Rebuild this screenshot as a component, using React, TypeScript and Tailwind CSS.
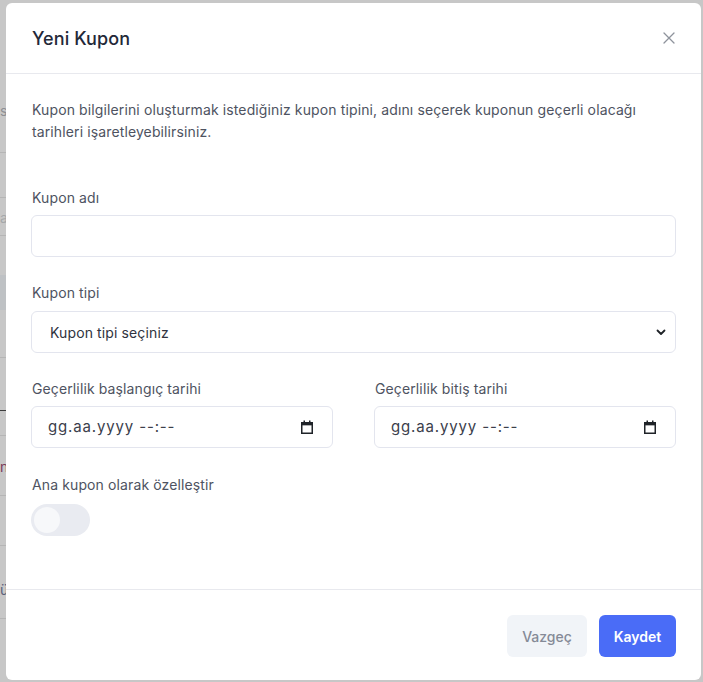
import React from "react";

function CalendarIcon() {
  return (
    <svg width="12" height="14" viewBox="0 0 12 14" className="shrink-0">
      <rect x="0.75" y="2.75" width="10.5" height="10.5" fill="none" stroke="#1f2328" strokeWidth="1.5" />
      <rect x="0.75" y="2.75" width="10.5" height="2.6" fill="#1f2328" />
      <rect x="2.5" y="0.5" width="1.5" height="2.5" fill="#1f2328" />
      <rect x="8" y="0.5" width="1.5" height="2.5" fill="#1f2328" />
    </svg>
  );
}

function DateField() {
  return (
    <div className="flex h-[42px] items-center justify-between rounded-[6px] border border-[#e3e5ee] bg-white pl-[16px] pr-[19px] text-[15px] tracking-[0.85px] text-[#3b404c]">
      <span>gg.aa.yyyy --:--</span>
      <CalendarIcon />
    </div>
  );
}

export default function App() {
  return (
    <div
      className="relative h-[682px] w-[703px] overflow-hidden bg-[#c7c7c7]"
      style={{ fontFamily: "Inter, 'Noto Sans', sans-serif" }}
    >
      {/* faint background page fragments */}
      <div className="absolute left-0 top-0 h-full w-[6px]">
        <div className="absolute left-0 top-[100px] text-[14px] text-[#8d8f93]">si</div>
        <div className="absolute left-0 top-[152px] h-px w-full bg-[#b5b5b5]" />
        <div className="absolute left-0 top-[197px] h-px w-full bg-[#b5b5b5]" />
        <div className="absolute left-0 top-[207px] text-[14px] text-[#a5a7aa]">ar</div>
        <div className="absolute left-0 top-[235px] h-px w-full bg-[#b5b5b5]" />
        <div className="absolute left-0 top-[275px] h-[35px] w-full bg-[#bec1c4]" />
        <div className="absolute left-0 top-[357px] h-px w-full bg-[#b5b5b5]" />
        <div className="absolute left-0 top-[410px] h-px w-full bg-[#3d3d3d]" />
        <div className="absolute left-0 top-[435px] h-px w-full bg-[#b5b5b5]" />
        <div className="absolute left-0 top-[456px] text-[14px] text-[#7a3a5a]">n</div>
        <div className="absolute left-0 top-[495px] h-px w-full bg-[#b5b5b5]" />
        <div className="absolute left-0 top-[545px] h-px w-full bg-[#b5b5b5]" />
        <div className="absolute left-0 top-[579px] text-[14px] text-[#5a5f7a]">ü</div>
        <div className="absolute left-0 top-[618px] h-px w-full bg-[#b5b5b5]" />
      </div>

      <div className="absolute left-[6px] top-[3px] flex h-[677px] w-[695px] flex-col rounded-[6px] bg-white">
        {/* header */}
        <div className="flex h-[71px] items-center justify-between border-b border-[#e8e9ee] pl-[26px] pr-[25px]">
          <h2 className="text-[18px] font-medium tracking-[0.1px] text-[#232838]">Yeni Kupon</h2>
          <svg width="12" height="12" viewBox="0 0 12 12" className="mr-[1px]">
            <path d="M1 1L11 11M11 1L1 11" stroke="#8e939c" strokeWidth="1.3" strokeLinecap="round" />
          </svg>
        </div>

        {/* body */}
        <div className="flex flex-1 flex-col px-[25px] pt-[25px]">
          <p className="pl-px text-[14px] leading-[22px] tracking-[0.12px] text-[#4e5361]">
            Kupon bilgilerini oluşturmak istediğiniz kupon tipini, adını seçerek kuponun geçerli olacağı tarihleri işaretleyebilirsiniz.
          </p>

          <label className="mt-[45px] pl-px text-[14px] leading-[20px] tracking-[0.12px] text-[#4e5361]">Kupon adı</label>
          <div className="mt-[7px] h-[42px] rounded-[6px] border border-[#e3e5ee] bg-white" />

          <label className="mt-[26px] pl-px text-[14px] leading-[20px] tracking-[0.12px] text-[#4e5361]">Kupon tipi</label>
          <div className="mt-[8px] flex h-[42px] items-center justify-between rounded-[6px] border border-[#e3e5ee] bg-white pl-[18px] pr-[9px]">
            <span className="text-[14px] tracking-[0.12px] text-[#2f3340]">Kupon tipi seçiniz</span>
            <svg width="10" height="7" viewBox="0 0 10 7">
              <path d="M1.5 1.5L5 5L8.5 1.5" fill="none" stroke="#1f2328" strokeWidth="1.8" strokeLinecap="round" strokeLinejoin="round" />
            </svg>
          </div>

          <div className="mt-[26px] grid grid-cols-2 gap-x-[41px]">
            <div className="flex flex-col">
              <label className="pl-px text-[14px] leading-[20px] tracking-[0.12px] text-[#4e5361]">Geçerlilik başlangıç tarihi</label>
              <div className="mt-[7px]">
                <DateField />
              </div>
            </div>
            <div className="flex flex-col">
              <label className="pl-px text-[14px] leading-[20px] tracking-[0.12px] text-[#4e5361]">Geçerlilik bitiş tarihi</label>
              <div className="mt-[7px]">
                <DateField />
              </div>
            </div>
          </div>

          <label className="mt-[27px] pl-px text-[14px] leading-[20px] tracking-[0.12px] text-[#4e5361]">Ana kupon olarak özelleştir</label>
          <div className="mt-[9px] flex h-[32px] w-[59px] items-center rounded-full bg-[#e9ebf1] pl-[3px]">
            <div className="h-[26px] w-[26px] rounded-full bg-[#f7f8fa]" />
          </div>
        </div>

        {/* footer */}
        <div className="flex h-[91px] items-start justify-end gap-[12px] border-t border-[#e8e9ee] px-[25px] pt-[25px]">
          <button className="h-[42px] w-[80px] rounded-[6px] bg-[#f1f4f8] text-[14px] font-medium text-[#858a97]">
            Vazgeç
          </button>
          <button className="h-[42px] w-[77px] rounded-[6px] bg-[#4a6cf7] text-[14px] font-semibold text-white">
            Kaydet
          </button>
        </div>
      </div>
    </div>
  );
}
